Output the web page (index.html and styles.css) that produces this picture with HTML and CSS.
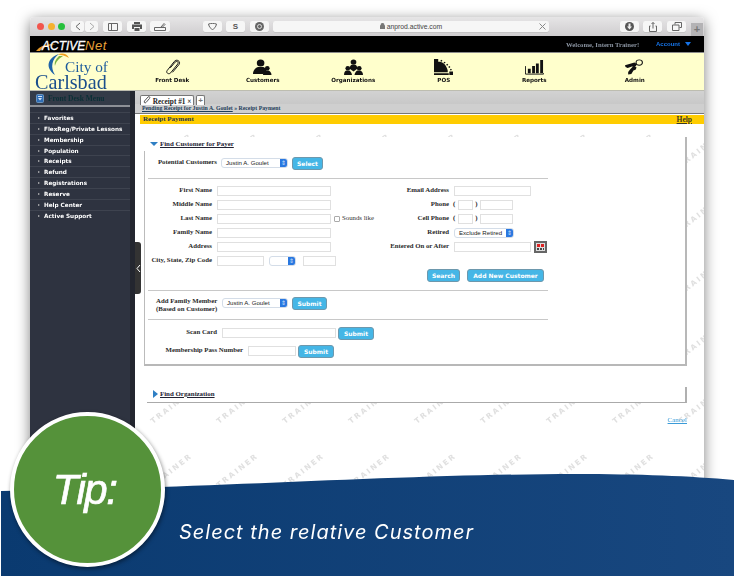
FILE: index.html
```html
<!DOCTYPE html>
<html lang="en">
<head>
  <meta charset="UTF-8" />
  <title>Select the relative Customer</title>
  <link rel="stylesheet" href="styles.css">
</head>
<body>
<div class="stage">

  <div class="window">
    <div class="toolbar">
      <span class="light red"></span><span class="light amber"></span><span class="light green"></span>
      <div class="navpair">
        <span class="tbtn half"><svg width="6" height="9" viewBox="0 0 6 9"><path d="M5 1 1 4.500 5 8" class="ico"/></svg></span>
        <span class="tbtn half"><svg width="6" height="9" viewBox="0 0 6 9"><path d="M1 1 5 4.500 1 8" class="ico light-ico"/></svg></span>
      </div>
      <span class="tbtn m5"><svg width="10" height="8" viewBox="0 0 10 8"><path d="M.5.5h9v7h-9zM3.500.5v7" class="ico"/></svg></span>
      <span class="tbtn m5"><svg width="10" height="9" viewBox="0 0 10 9"><path d="M2 0h6v2H2zM0 2.500h10V7H8V5H2v2H0zM2.500 6h5v3h-5z" fill="#555"/></svg></span>
      <span class="tbtn m4 wide"><svg width="12" height="8" viewBox="0 0 12 8"><path d="M.5 4.500h11v3H.5zM7 4 10 .5 11 1.500 8 4.500" class="ico"/></svg></span>
      <span class="tbtn m33"><svg width="9" height="7" viewBox="0 0 9 7"><path d="M.5 1C3 .2 6 .2 8.500 1 8 4 6 6 4.500 6.500 3 6 1 4 .5 1z" class="ico"/></svg></span>
      <span class="tbtn m4 glyph">S</span>
      <span class="tbtn m5"><svg width="9" height="9" viewBox="0 0 9 9"><circle cx="4.500" cy="4.500" r="4.500" fill="#666"/><circle cx="4.500" cy="4.500" r="2" fill="none" stroke="#ddd"/></svg></span>
      <div class="urlbar">
        <span class="url"><svg width="5" height="6" viewBox="0 0 5 6"><path d="M0 2.500h5V6H0zM1 2.500V1.500a1.500 1.500 0 0 1 3 0v1" fill="#777" stroke="#777" stroke-width=".5"/></svg> anprod.active.com</span>
        <svg class="urlx" width="7" height="7" viewBox="0 0 7 7"><path d="M.5.500l6 6M6.500.500l-6 6" stroke="#888" fill="none"/></svg>
      </div>
      <span class="tbtn m71"><svg width="9" height="9" viewBox="0 0 9 9"><circle cx="4.500" cy="4.500" r="4.500" fill="#555"/><path d="M3.500 1.500h2v3H7L4.500 7.500 2 4.500h1.500z" fill="#eee"/></svg></span>
      <span class="tbtn m4"><svg width="8" height="10" viewBox="0 0 8 10"><path d="M1.500 4H.5v5.500h7V4h-1M4 6.500V.5M2.500 2 4 .5 5.500 2" class="ico"/></svg></span>
      <span class="tbtn m5"><svg width="10" height="9" viewBox="0 0 10 9"><path d="M3 2.500V.5h6.500v5H7.500M.5 3h6.500v5.500H.5z" class="ico"/></svg></span>
      <span class="newtab">+</span>
    </div>

    <div class="blackbar">
      <svg class="activenet" width="82" height="16" viewBox="0 0 82 16">
        <path d="M6 15C11 9 18 7 26 9 19 9 13 11 10 15z" fill="#e59a2a"/>
        <text x="12" y="14" class="an-active">ACTIVE</text>
        <text x="55" y="14" class="an-net">Net</text>
      </svg>
      <span class="welcome">Welcome, Intern Trainer!</span>
      <span class="account">Account</span>
      <span class="acct-caret"></span>
    </div>

    <div class="mainnav">
      <svg class="citylogo" width="97" height="37" viewBox="0 0 97 37">
        <path d="M29 1C17 5 15 15 25 22 20 14 22 6 29 1z" fill="#1f63a8"/>
        <path d="M28 1.500C32 -.5 37 .5 39 5 35 2.500 32 2 28 1.500z" fill="#f0a01e"/>
        <path d="M29 3C26 6 24 9 25 13 26 9 28 6 33 3z" fill="#7cb342"/>
        <text x="35" y="19" class="logo-city">City of</text>
        <text x="5" y="36" class="logo-carlsbad">Carlsbad</text>
      </svg>
      <div class="navitem">
        <svg viewBox="0 0 18 18" preserveAspectRatio="xMidYMid meet"><path d="M6.500 10 12 3.500C13.500 1.500 16.500 3.500 15 5.500L7 15.500C5 18 1 15.500 3 13L11 2.800C13.500 -.5 18.500 2.500 16.500 6L9 15" fill="none" stroke="#111" stroke-width="1.100"/></svg>
        <span>Front Desk</span>
      </div>
      <div class="navitem">
        <svg viewBox="0 0 20 18" preserveAspectRatio="none"><circle cx="8" cy="4.500" r="4"/><path d="M0 17c0-5 3-7 5-8h6c2 1 3 2 3.500 3.500L11 17z"/><circle cx="15" cy="10.500" r="2.500"/><path d="M10.500 18c0-3 2-4.500 3-5h3c1 .5 3 2 3 5z"/></svg>
        <span>Customers</span>
      </div>
      <div class="navitem">
        <svg viewBox="0 0 20 18" preserveAspectRatio="none"><circle cx="10" cy="3.500" r="3"/><path d="M6 11c0-3 1-4 2-4.500h4c1 .5 2 1.500 2 4.500l-4 3z"/><circle cx="4" cy="10.500" r="2.500"/><path d="M0 18c0-3 1-4.500 2.500-5h3c1 .5 2.500 2 3 5z"/><circle cx="16" cy="10.500" r="2.500"/><path d="M11 18c.5-3 2-4.500 3-5h3c1.500.5 3 2 3 5z"/></svg>
        <span>Organizations</span>
      </div>
      <div class="navitem">
        <svg viewBox="0 0 18 18" preserveAspectRatio="none"><path d="M0 0h4v3h2c3 1 6 4 7 10v2H0z"/><path d="M6.500 1.500l1 1M9.500 3.500l1 1M12 6l1 1M14 8.500l1 1M15.500 11.500l1 1" stroke="#111" stroke-width="1.500"/><path d="M14.500 14h3.500v4h-3.500zM0 16h14v2H0z"/></svg>
        <span>POS</span>
      </div>
      <div class="navitem">
        <svg viewBox="0 0 20 18" preserveAspectRatio="none"><path d="M.5 8v9h19v-1" fill="none" stroke="#111"/><path d="M3 11h3v5H3zM7.500 8h3v8h-3zM11.500 5h3v11h-3zM16 1h3v15h-3z"/></svg>
        <span>Reports</span>
      </div>
      <div class="navitem navlast">
        <svg viewBox="0 0 18 18" preserveAspectRatio="none"><circle cx="13.500" cy="4" r="3" fill="none" stroke="#111"/><path d="M0 7l9-3 2.500 2-2 3-3-.5-4 1.500-2-1z"/><path d="M8 8l3 1.500-1 2.500-2 1-2 4-3 .5 0-3 2-3z"/></svg>
        <span>Admin</span>
      </div>
    </div>

    <div class="appbody">
      <aside class="sidebar">
        <div class="side-head">
          <svg width="8" height="9" viewBox="0 0 8 9"><rect x=".5" y=".5" width="7" height="8" rx="1" fill="#2f6db5" stroke="#6c94bb"/><path d="M2 2h4v1H2zM2 4h4L4 6.500z" fill="#cfe0f2"/></svg>
          <span class="side-title">Front Desk Menu</span>
        </div>
        <ul class="side-menu">
          <li>Favorites</li>
          <li>FlexReg/Private Lessons</li>
          <li>Membership</li>
          <li>Population</li>
          <li>Receipts</li>
          <li>Refund</li>
          <li>Registrations</li>
          <li>Reserve</li>
          <li>Help Center</li>
          <li>Active Support</li>
        </ul>
      </aside>

      <main class="content">
        <svg class="watermark" width="569" height="470">
          <defs>
            <pattern id="wm" width="66" height="64" patternUnits="userSpaceOnUse" x="18" y="35">
              <text transform="translate(0 42) rotate(-38)" class="wm-text">TRAINER</text>
              <text transform="translate(66 42) rotate(-38)" class="wm-text">TRAINER</text>
            </pattern>
          </defs>
          <rect width="569" height="470" fill="url(#wm)"/>
        </svg>

        <span class="sidetoggle"><svg width="5" height="9" viewBox="0 0 5 9"><path d="M4 1 1 4.500 4 8" fill="none" stroke="#fff"/></svg></span>

        <div class="tabstrip">
          <span class="tab"><svg width="8" height="8" viewBox="0 0 8 8"><path d="M1.500 5 5 1c1-1 2.500 0 1.500 1.500L3 6.500C2 7.500 .5 6.500 1.500 5" fill="none" stroke="#555"/></svg> Receipt #1 <b>×</b></span>
          <span class="tab tabplus">+</span>
        </div>
        <div class="crumb"><u>Pending Receipt for Justin A. Goulet</u> » Receipt Payment</div>
        <div class="titlebar"><span>Receipt Payment</span><a class="help">Help</a></div>

        <section class="card">
          <h3 class="card-title"><span class="tri-down"></span><u>Find Customer for Payer</u></h3>

          <div class="card-body">
            <div class="row potential">
              <label class="lbl w69">Potential Customers</label>
              <span class="sel w67">Justin A. Goulet</span>
              <button class="btn b31">Select</button>
            </div>
            <hr class="rule">

            <div class="fields">
              <div class="col">
                <div class="frow"><label class="lbl w64">First Name</label><input class="w114"></div>
                <div class="frow"><label class="lbl w64">Middle Name</label><input class="w114"></div>
                <div class="frow"><label class="lbl w64">Last Name</label><input class="w114"><span class="check"></span><label class="plain">Sounds like</label></div>
                <div class="frow"><label class="lbl w64">Family Name</label><input class="w114"></div>
                <div class="frow"><label class="lbl w64">Address</label><input class="w114"></div>
                <div class="frow"><label class="lbl w64">City, State, Zip Code</label><input class="w47"><span class="sel w27"></span><input class="w33"></div>
              </div>
              <div class="col col2">
                <div class="frow"><label class="lbl w60">Email Address</label><input class="w77"></div>
                <div class="frow"><label class="lbl w60">Phone</label><span class="paren">(</span><input class="w15"><span class="paren close">)</span><input class="w33"></div>
                <div class="frow"><label class="lbl w60">Cell Phone</label><span class="paren">(</span><input class="w15"><span class="paren close">)</span><input class="w33"></div>
                <div class="frow"><label class="lbl w60">Retired</label><span class="sel w60 sel-retired">Exclude Retired</span></div>
                <div class="frow"><label class="lbl w60">Entered On or After</label><input class="w77">
                  <svg class="calbtn" width="13" height="12" viewBox="0 0 13 12"><rect width="13" height="12" fill="#666"/><rect x="2" y="2" width="9" height="8" fill="#ddd"/><path d="M3 3h3v3H3zM7 3h3v3H7z" fill="#d22"/><path d="M3 7h2v2H3zM6 7h2v2H6zM9 7h1v2H9z" fill="#444"/></svg>
                </div>
              </div>
            </div>

            <div class="actions">
              <button class="btn b33">Search</button>
              <button class="btn b77">Add New Customer</button>
            </div>
            <hr class="rule rule-b">

            <div class="row family">
              <label class="lbl two">Add Family Member<br>(Based on Customer)</label>
              <span class="sel w66">Justin A. Goulet</span>
              <button class="btn b35">Submit</button>
            </div>
            <hr class="rule rule-c">

            <div class="row scan">
              <label class="lbl w69">Scan Card</label>
              <input class="w114">
              <button class="btn b36 near">Submit</button>
            </div>
            <div class="row pass">
              <label class="lbl w95">Membership Pass Number</label>
              <input class="w48">
              <button class="btn b36 near">Submit</button>
            </div>
          </div>
        </section>

        <section class="card-closed">
          <h3 class="card-title"><span class="tri-right"></span><u>Find Organization</u></h3>
        </section>

        <div class="cancelrow"><a class="cancel">Cancel</a></div>
      </main>
    </div>
  </div>

  <svg class="wave" width="734" height="110" viewBox="0 0 734 110">
    <defs>
      <linearGradient id="waveg" x1="0" x2="1" y1="0" y2="0">
        <stop offset="0" stop-color="#0a3a70"/>
        <stop offset="1" stop-color="#18477f"/>
      </linearGradient>
    </defs>
    <path d="M1 25 C150 25 400 8 575 8 C640 8 690 10 734 14 V110 H1 Z" fill="url(#waveg)"/>
  </svg>
  <div class="tipcircle"><span>Tip:</span></div>
  <p class="tiptext">Select the relative Customer</p>
</div>
</body>
</html>
```

FILE: styles.css
```css
html, body {
  margin: 0;
  padding: 0;
  background: #fff;
}
.stage {
  position: relative;
  width: 734px;
  height: 576px;
  overflow: hidden;
  font-family: "Liberation Serif", serif;
}

/* browser window */
.window {
  position: absolute;
  left: 30px;
  top: 17px;
  width: 674px;
  height: 559px;
  display: flex;
  flex-direction: column;
  border-radius: 4px 4px 0 0;
  box-shadow: 0 3px 14px rgba(0, 0, 0, 0.5);
  background: #fff;
  filter: blur(0.35px);
}
.toolbar {
  height: 19px;
  display: flex;
  align-items: center;
  background: linear-gradient(#e6e5e6, #cfcdcf);
  border-radius: 4px 4px 0 0;
  padding-left: 7px;
  flex: none;
}
.light {
  width: 7px;
  height: 7px;
  border-radius: 50%;
  margin-right: 3.500px;
}
.red { background: #f2554d; }
.amber { background: #f5b12e; }
.green { background: #26c03c; }
.navpair {
  display: flex;
  gap: 1px;
  margin-left: 2.500px;
}
.tbtn {
  width: 19px;
  height: 11px;
  background: #f6f6f6;
  border-radius: 2px;
  display: flex;
  align-items: center;
  justify-content: center;
  box-shadow: 0 0.5px 0 #b5b5b5;
  flex: none;
}
.half { width: 13px; }
.wide { width: 20px; }
.m5 { margin-left: 5px; }
.m4 { margin-left: 4px; }
.m33 { margin-left: 33px; }
.m71 { margin-left: 71px; }
.glyph {
  font: bold 8px "Liberation Sans", sans-serif;
  color: #555;
}
.ico {
  fill: none;
  stroke: #666;
  stroke-width: 1;
}
.light-ico { stroke: #aaa; }
.urlbar {
  width: 276px;
  height: 11px;
  margin-left: 4px;
  background: #f6f6f6;
  border-radius: 2px;
  box-shadow: 0 0.5px 0 #b5b5b5;
  position: relative;
  display: flex;
  align-items: center;
  justify-content: center;
}
.url {
  font: 6.800px "Liberation Sans", sans-serif;
  color: #444;
}
.urlx {
  position: absolute;
  right: 3px;
  top: 2px;
}
.newtab {
  width: 12px;
  height: 13px;
  margin-left: 5px;
  margin-top: 6px;
  background: #b4b3b5;
  color: #777;
  font: bold 11px/13px "Liberation Sans", sans-serif;
  text-align: center;
}

/* top bars */
.blackbar {
  height: 16px;
  background: #000;
  border-bottom: 1px solid #8b8b8b;
  display: flex;
  align-items: center;
  flex: none;
}
.activenet {
  flex: none;
}
.an-active {
  font: italic 12px "Liberation Sans", sans-serif;
  stroke: #fff;
  stroke-width: 0.3px;
  fill: #fff;
}
.an-net {
  font: italic 13px "Liberation Sans", sans-serif;
  letter-spacing: 0.6px;
  fill: #e8a238;
}
.welcome {
  margin-left: 454px;
  color: #8a93a0;
  font: bold 6.700px "Liberation Serif", serif;
  width: 90px;
  white-space: nowrap;
}
.account {
  color: #1673e6;
  font: bold 6px "Liberation Sans", sans-serif;
}
.acct-caret {
  margin-left: 5px;
  border: 3px solid transparent;
  border-top: 4px solid #1673e6;
  border-bottom: 0;
}
.mainnav {
  height: 37px;
  background: #ffffcc;
  border-bottom: 1px solid #bdbdb0;
  display: flex;
  flex: none;
}
.citylogo {
  width: 97px;
  flex: none;
  overflow: visible;
}
.logo-city {
  font: 15.300px "Liberation Serif", serif;
  fill: #1e5c9c;
}
.logo-carlsbad {
  font: 20.200px "Liberation Serif", serif;
  fill: #1b4f8c;
}
.navitem {
  width: 90.500px;
  display: flex;
  flex-direction: column;
  align-items: center;
  padding-top: 6px;
  box-sizing: border-box;
  flex: none;
  fill: #111;
  font: bold 5.600px/8px "DejaVu Sans", sans-serif;
  color: #111;
}
.navlast { margin-left: 10px; }
.navitem svg {
  width: 19px;
  height: 16px;
  margin-bottom: 1px;
}

/* app area */
.appbody {
  flex: 1;
  display: flex;
  min-height: 0;
}
.sidebar {
  width: 100px;
  background: #2e3340;
  border-right: 5px solid #23262f;
  flex: none;
}
.side-head {
  height: 14px;
  display: flex;
  align-items: center;
  padding-left: 6px;
  background: #343b48;
  border-bottom: 2px solid #8d9097;
}
.side-title {
  margin-left: 4px;
  color: #0b2f36;
  font: bold 7.500px "Liberation Serif", serif;
  white-space: nowrap;
}
.side-menu {
  list-style: none;
  margin: 5px 0 0;
  padding: 0;
}
.side-menu li {
  height: 10.850px;
  box-sizing: border-box;
  border-top: 1px solid #3e434f;
  padding-left: 14px;
  color: #fff;
  font: bold 5.700px/10px "DejaVu Sans", sans-serif;
  position: relative;
  white-space: nowrap;
}
.side-menu li::before {
  content: "";
  position: absolute;
  left: 8px;
  top: 4px;
  border-left: 2.500px solid #bbb;
  border-top: 1.500px solid transparent;
  border-bottom: 1.500px solid transparent;
}

/* content */
.content {
  flex: 1;
  position: relative;
  min-width: 0;
  background: #fff;
  color: #222;
}
.watermark {
  position: absolute;
  left: 0;
  top: 0;
}
.wm-text {
  font: bold 7.500px "DejaVu Sans", sans-serif;
  letter-spacing: 2px;
  fill: #e0e0e0;
}
.sidetoggle {
  position: absolute;
  left: 0;
  top: 151px;
  width: 6px;
  height: 52px;
  background: #333;
  border-radius: 0 3px 3px 0;
  display: flex;
  align-items: center;
  justify-content: center;
}
.tabstrip {
  position: relative;
  z-index: 1;
  height: 13px;
  background: linear-gradient(#d2d2d2, #c8c8c8);
  padding: 4px 0 0 5px;
  box-sizing: border-box;
  display: flex;
  gap: 2px;
}
.tab {
  height: 10px;
  width: 54px;
  box-sizing: border-box;
  background: #fff;
  border: 1px solid #777;
  border-bottom: 0;
  border-radius: 2px 2px 0 0;
  font: bold 7.300px/9px "Liberation Serif", serif;
  padding-left: 2px;
  white-space: nowrap;
}
.tabplus {
  width: 9px;
  padding: 0;
  text-align: center;
  color: #777;
  font: bold 8px/9px "Liberation Sans", sans-serif;
}
.crumb {
  position: relative;
  height: 10px;
  background: #cfcfcf;
  border-bottom: 1px solid #777;
  box-sizing: border-box;
  padding-left: 7px;
  font: bold 5.800px/9px "Liberation Serif", serif;
  color: #1d3d5a;
  white-space: nowrap;
}
.titlebar {
  position: relative;
  height: 9px;
  margin: 1px 0 0 5px;
  background: #ffcc00;
  display: flex;
  justify-content: space-between;
  padding: 0 12px 0 3px;
  font: bold 7px/9px "Liberation Serif", serif;
  color: #1d3550;
}
.help {
  text-decoration: underline;
  color: #3a3a20;
  font-size: 7.500px;
}
.card {
  position: relative;
  margin: 13px 17px 0 9px;
  height: 229px;
  box-sizing: border-box;
  background: #fff;
  border-right: 2px solid #b8b8b8;
  border-bottom: 2px solid #b8b8b8;
}
.card-title {
  margin: 0;
  height: 14px;
  padding-left: 6px;
  font: bold 6.900px/14px "Liberation Serif", serif;
  color: #223;
  display: flex;
  align-items: center;
  white-space: nowrap;
}
.card-body {
  height: 213px;
  box-sizing: border-box;
  border-left: 1px solid #bbb;
  padding: 7px 0 0 3px;
}
.tri-down {
  border: 4px solid transparent;
  border-top: 4px solid #2f7fc4;
  border-bottom: 0;
  margin-right: 2px;
}
.tri-right {
  border: 4px solid transparent;
  border-left: 5px solid #2f7fc4;
  border-right: 0;
  margin-right: 2px;
}
.lbl {
  font: bold 6.800px/9px "Liberation Serif", serif;
  color: #2a2a2a;
  text-align: right;
  white-space: nowrap;
  flex: none;
  margin-top: -1px;
}
.plain {
  font: 6.800px/9px "Liberation Serif", serif;
  margin-left: 2px;
  color: #333;
  white-space: nowrap;
}
.row {
  display: flex;
  align-items: flex-start;
}
.potential { height: 14px; }
.potential .lbl { margin-right: 4px; }
.rule {
  border: 0;
  border-top: 1px solid #c8c8c8;
  margin: 6px 0 0;
  width: 400px;
}
.fields {
  display: flex;
  margin-top: 6px;
}
.col { width: 241px; }
.col2 { width: 160px; }
.frow {
  height: 14px;
  display: flex;
  align-items: flex-start;
}
.frow .lbl {
  margin: 0 5px 0 0;
}
.w64 { width: 64px; }
.w60 { width: 60px; }
.w69 { width: 69px; }
.w95 { width: 95px; }
.frow input { margin-top: 1px; }
input {
  box-sizing: border-box;
  height: 10px;
  padding: 0;
  border: 1px solid #e0e0e0;
  background: #fff;
  display: block;
  flex: none;
}
.w114 { width: 114px; }
.w47 { width: 47px; }
.w48 { width: 48px; }
.w33 { width: 33px; }
.w77 { width: 77px; }
.w15 { width: 15px; }
.paren {
  width: 4px;
  margin-left: -1px;
  margin-right: 1px;
  font: bold 6.800px/9px "Liberation Serif", serif;
}
.close {
  width: 7px;
  margin: 0;
  text-align: center;
}
.check {
  width: 6px;
  height: 6px;
  border: 1px solid #aaa;
  border-radius: 1px;
  margin: 3px 0 0 3px;
  box-sizing: border-box;
}
.sel {
  position: relative;
  display: block;
  height: 10px;
  box-sizing: border-box;
  background: #fff;
  border: 1px solid #d4dde8;
  border-radius: 3px;
  font: 6.100px/8px "Liberation Sans", sans-serif;
  color: #222;
  padding-left: 4px;
  flex: none;
  overflow: hidden;
  white-space: nowrap;
}
.sel::after {
  content: "⇕";
  position: absolute;
  right: 0;
  top: 0;
  bottom: 0;
  width: 7px;
  background: #2a78e0;
  color: #cfe3fb;
  font: 6px/8px "DejaVu Sans", sans-serif;
  text-align: center;
}
.w66 { width: 66px; }
.w67 { width: 67px; }
.w27 { width: 27px; margin: 1px 7px 0 5px; }
.sel-retired { margin-top: 1px; }
.calbtn {
  margin: 0 0 0 3px;
  flex: none;
}
.btn {
  height: 13px;
  padding: 0;
  margin: -1px 0 0 4px;
  background: #45b6e6;
  border: 1px solid #6d98ad;
  border-radius: 3px;
  color: #fff;
  font: bold 6px/10px "DejaVu Sans", sans-serif;
  flex: none;
  white-space: nowrap;
}
.near { margin-left: 2px; }
.b31 { width: 31px; }
.b33 { width: 33px; }
.b35 { width: 35px; }
.b36 { width: 36px; }
.b77 { width: 77px; }
.actions {
  display: flex;
  justify-content: flex-end;
  width: 396px;
  gap: 7px;
}
.actions .btn { margin: 0; }
.rule-b { margin-top: 8px; }
.family { margin-top: 7px; height: 21px; }
.two {
  width: 61px;
  margin: -1px 5px 0 8px;
  text-align: center;
  line-height: 8px;
}
.rule-c { margin-top: 0; }
.scan { margin-top: 8px; height: 18px; }
.scan .lbl { margin-right: 5px; }
.pass .lbl { margin-right: 5px; }
.card-closed {
  position: relative;
  margin: 21px 17px 0 12px;
  height: 15px;
  background: #fff;
  border-bottom: 1px solid #aaa;
  border-right: 2px solid #b0b0b0;
}
.card-closed .card-title {
  padding: 0 0 0 6px;
}
.cancelrow {
  position: relative;
  text-align: right;
  padding: 13px 17px 0 0;
  font: 7px "Liberation Serif", serif;
}
.cancel {
  color: #3a9bd8;
  text-decoration: underline;
}

/* tip banner */
.wave {
  position: absolute;
  left: 0;
  bottom: 0;
}
.tipcircle {
  position: absolute;
  left: 10px;
  top: 412px;
  width: 155px;
  height: 155px;
  box-sizing: border-box;
  border: 4px solid #fff;
  border-radius: 50%;
  background: #55923a;
  box-shadow: 1px 2px 4px rgba(0, 0, 0, 0.45);
  display: flex;
  align-items: center;
  justify-content: center;
  padding-right: 6px;
  color: #fff;
  font: italic 42px "Liberation Sans", sans-serif;
  letter-spacing: -1.500px;
  -webkit-text-stroke: 0.7px #fff;
}
.tiptext {
  position: absolute;
  left: 179px;
  top: 520px;
  margin: 0;
  color: #fff;
  font: italic 20px "Inter", sans-serif;
  letter-spacing: 1px;
  white-space: nowrap;
}
```
